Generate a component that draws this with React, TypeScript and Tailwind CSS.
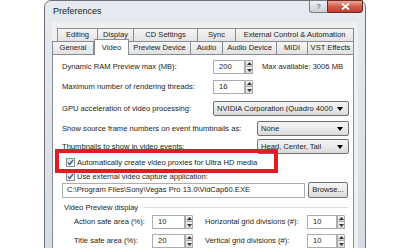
import React from 'react';

const font = { fontFamily: '"Liberation Sans", Arial, sans-serif' };

function Tab({ label, w, selected }: { label: string; w: string; selected?: boolean }) {
  if (selected) {
    return (
      <div
        className={`${w} relative z-10 -mt-[2px] h-[16px] -mb-[1px] border border-b-0 border-[#898c95] bg-white flex items-center justify-center`}
      >
        {label}
      </div>
    );
  }
  return (
    <div
      className={`${w} h-[13px] border border-b-0 border-[#898c95] -ml-[1px] first:ml-0 bg-gradient-to-b from-[#f6f6f6] to-[#e2e2e2] flex items-center justify-center whitespace-nowrap`}
    >
      {label}
    </div>
  );
}

function Arrow({ up }: { up?: boolean }) {
  return (
    <svg width="5" height="3" viewBox="0 0 5 3">
      <path d={up ? 'M0 3 L2.5 0 L5 3 Z' : 'M0 0 L5 0 L2.5 3 Z'} fill="#333" />
    </svg>
  );
}

function Spin({ value, w }: { value: string; w: string }) {
  return (
    <div className="flex h-[14px]">
      <div className={`${w} h-full border border-[#abadb3] bg-white flex items-center pl-[5px]`}>{value}</div>
      <div className="w-[8px] h-full flex flex-col">
        <div className="h-[7px] border border-[#a9a9a9] rounded-tr-[1px] bg-gradient-to-b from-[#f4f4f4] to-[#d8d8d8] flex items-center justify-center">
          <Arrow up />
        </div>
        <div className="h-[7px] border border-t-0 border-[#a9a9a9] rounded-br-[1px] bg-gradient-to-b from-[#f4f4f4] to-[#d8d8d8] flex items-center justify-center">
          <Arrow />
        </div>
      </div>
    </div>
  );
}

function Combo({ value, w }: { value: string; w: string }) {
  return (
    <div
      className={`${w} h-[15px] border border-[#707070] rounded-[2px] bg-gradient-to-b from-[#f3f3f3] via-[#ebebeb] to-[#d9d9d9] flex items-center pl-[3px] pr-[5px]`}
    >
      <span className="flex-1 overflow-hidden whitespace-nowrap">{value}</span>
      <svg width="6" height="4" viewBox="0 0 6 4" className="ml-[2px] shrink-0">
        <path d="M0 0 L6 0 L3 4 Z" fill="#000" />
      </svg>
    </div>
  );
}

function Check() {
  return (
    <div className="w-[9px] h-[9px] border border-[#8e8f8f] bg-gradient-to-br from-[#e0e0e0] to-[#fbfbfb] flex items-center justify-center">
      <svg width="7" height="7" viewBox="0 0 7 7">
        <path d="M1 3.5 L2.8 5.5 L6 1" stroke="#4a5f97" strokeWidth="1.4" fill="none" />
      </svg>
    </div>
  );
}

export default function App() {
  return (
    <div className="w-[415px] h-[248px] overflow-hidden bg-white text-[7.6px] leading-none text-[#1c1c1c]" style={font}>
      <div className="ml-[44px] w-[322px] h-[262px] rounded-t-[7px] border border-[#6d737b] bg-gradient-to-b from-[#e6ebf0] to-[#d5dbe2] px-[7px] flex flex-col">
        {/* Title bar */}
        <div className="h-[21px] flex items-start">
          <span className="text-[9px] pt-[6px] pl-[1px] text-[#1a1a1a]">Preferences</span>
          <div className="flex-1" />
          <div className="w-[18px] h-[13px] -mt-[1px] border border-[#7b8088] border-r-0 rounded-bl-[3px] bg-gradient-to-b from-[#eef1f4] to-[#cbd1d8] flex items-center justify-center text-[8px] text-[#444]">
            ?
          </div>
          <div className="w-[36px] h-[13px] -mt-[1px] -mr-[5px] border border-[#6b2a22] rounded-br-[3px] bg-gradient-to-b from-[#e9a79b] via-[#d45a4a] to-[#c33d2f] flex items-center justify-center">
            <svg width="9" height="7" viewBox="0 0 9 7">
              <path d="M1 0.5 L8 6.5 M8 0.5 L1 6.5" stroke="#fff" strokeWidth="1.8" />
            </svg>
          </div>
        </div>

        {/* Client area */}
        <div className="flex-1 bg-[#f0f0f0] pt-[6px] flex flex-col">
          {/* Tabs back row */}
          <div className="flex ml-[5px]">
            <Tab label="Editing" w="w-[41px]" />
            <Tab label="Display" w="w-[37px]" />
            <Tab label="CD Settings" w="w-[65px]" />
            <Tab label="Sync" w="w-[39px]" />
            <Tab label="External Control & Automation" w="w-[119px]" />
          </div>
          {/* Tabs front row */}
          <div className="flex items-end h-[13px]">
            <Tab label="General" w="w-[42px]" />
            <Tab label="Video" w="w-[35px]" selected />
            <Tab label="Preview Device" w="w-[63px]" />
            <Tab label="Audio" w="w-[33px]" />
            <Tab label="Audio Device" w="w-[55px]" />
            <Tab label="MIDI" w="w-[32px]" />
            <Tab label="VST Effects" w="w-[47px]" />
          </div>

          {/* Panel */}
          <div className="relative w-[302px] flex-1 border border-[#898c95] bg-white flex flex-col">
            <div className="mt-[5px] h-[14px] flex items-center pl-[9px]">
              <span className="w-[151px]">Dynamic RAM Preview max (MB):</span>
              <Spin value="200" w="w-[32px]" />
              <span className="ml-[9px]">Max available: 3006 MB</span>
            </div>
            <div className="mt-[6px] h-[14px] flex items-center pl-[9px]">
              <span className="w-[151px]">Maximum number of rendering threads:</span>
              <Spin value="16" w="w-[32px]" />
            </div>
            <div className="mt-[7px] h-[15px] flex items-center pl-[9px]">
              <span className="w-[151px]">GPU acceleration of video processing:</span>
              <Combo value="NVIDIA Corporation (Quadro 4000" w="w-[136px]" />
            </div>
            <div className="mt-[5px] h-[15px] flex items-center pl-[9px]">
              <span className="w-[195px]">Show source frame numbers on event thumbnails as:</span>
              <Combo value="None" w="w-[92px]" />
            </div>
            <div className="mt-[3px] h-[15px] flex items-center pl-[9px]">
              <span className="w-[195px]">Thumbnails to show in video events:</span>
              <Combo value="Head, Center, Tail" w="w-[92px]" />
            </div>
            <div className="mt-[3px] h-[11px] flex items-center gap-[2px] pl-[13px]">
              <Check />
              <span>Automatically create video proxies for Ultra HD media</span>
            </div>
            <div className="mt-[3px] h-[11px] flex items-center gap-[2px] pl-[13px]">
              <Check />
              <span>Use external video capture application:</span>
            </div>
            <div className="h-[16px] flex items-center pl-[9px]">
              <div className="w-[243px] h-[15px] border border-[#abadb3] bg-white flex items-center pl-[4px] whitespace-nowrap overflow-hidden">
                C:\Program Files\Sony\Vegas Pro 13.0\VidCap60.EXE
              </div>
              <div className="ml-[3px] w-[40px] h-[16px] border border-[#707070] rounded-[2px] bg-gradient-to-b from-[#f3f3f3] via-[#ebebeb] to-[#d9d9d9] flex items-center justify-center">
                Browse...
              </div>
            </div>
            <div className="mt-[4px] h-[12px] flex items-center pl-[11px] pr-[5px]">
              <span>Video Preview display</span>
              <div className="flex-1 ml-[5px] h-[2px] border-t border-[#d5dfe5] border-b-white" />
            </div>
            <div className="mt-[1px] h-[14px] flex items-center pl-[21px]">
              <span className="w-[78px]">Action safe area (%):</span>
              <Spin value="10" w="w-[33px]" />
              <span className="ml-[12px] w-[102px]">Horizontal grid divisions (#):</span>
              <Spin value="10" w="w-[30px]" />
            </div>
            <div className="mt-[5px] h-[14px] flex items-center pl-[21px]">
              <span className="w-[78px]">Title safe area (%):</span>
              <Spin value="20" w="w-[33px]" />
              <span className="ml-[12px] w-[102px]">Vertical grid divisions (#):</span>
              <Spin value="10" w="w-[30px]" />
            </div>

            {/* Highlight overlay */}
            <div className="absolute left-[2px] top-[94px] w-[223px] h-[24px] border-[4px] border-[#e41b23]" />
          </div>
        </div>
      </div>
    </div>
  );
}
